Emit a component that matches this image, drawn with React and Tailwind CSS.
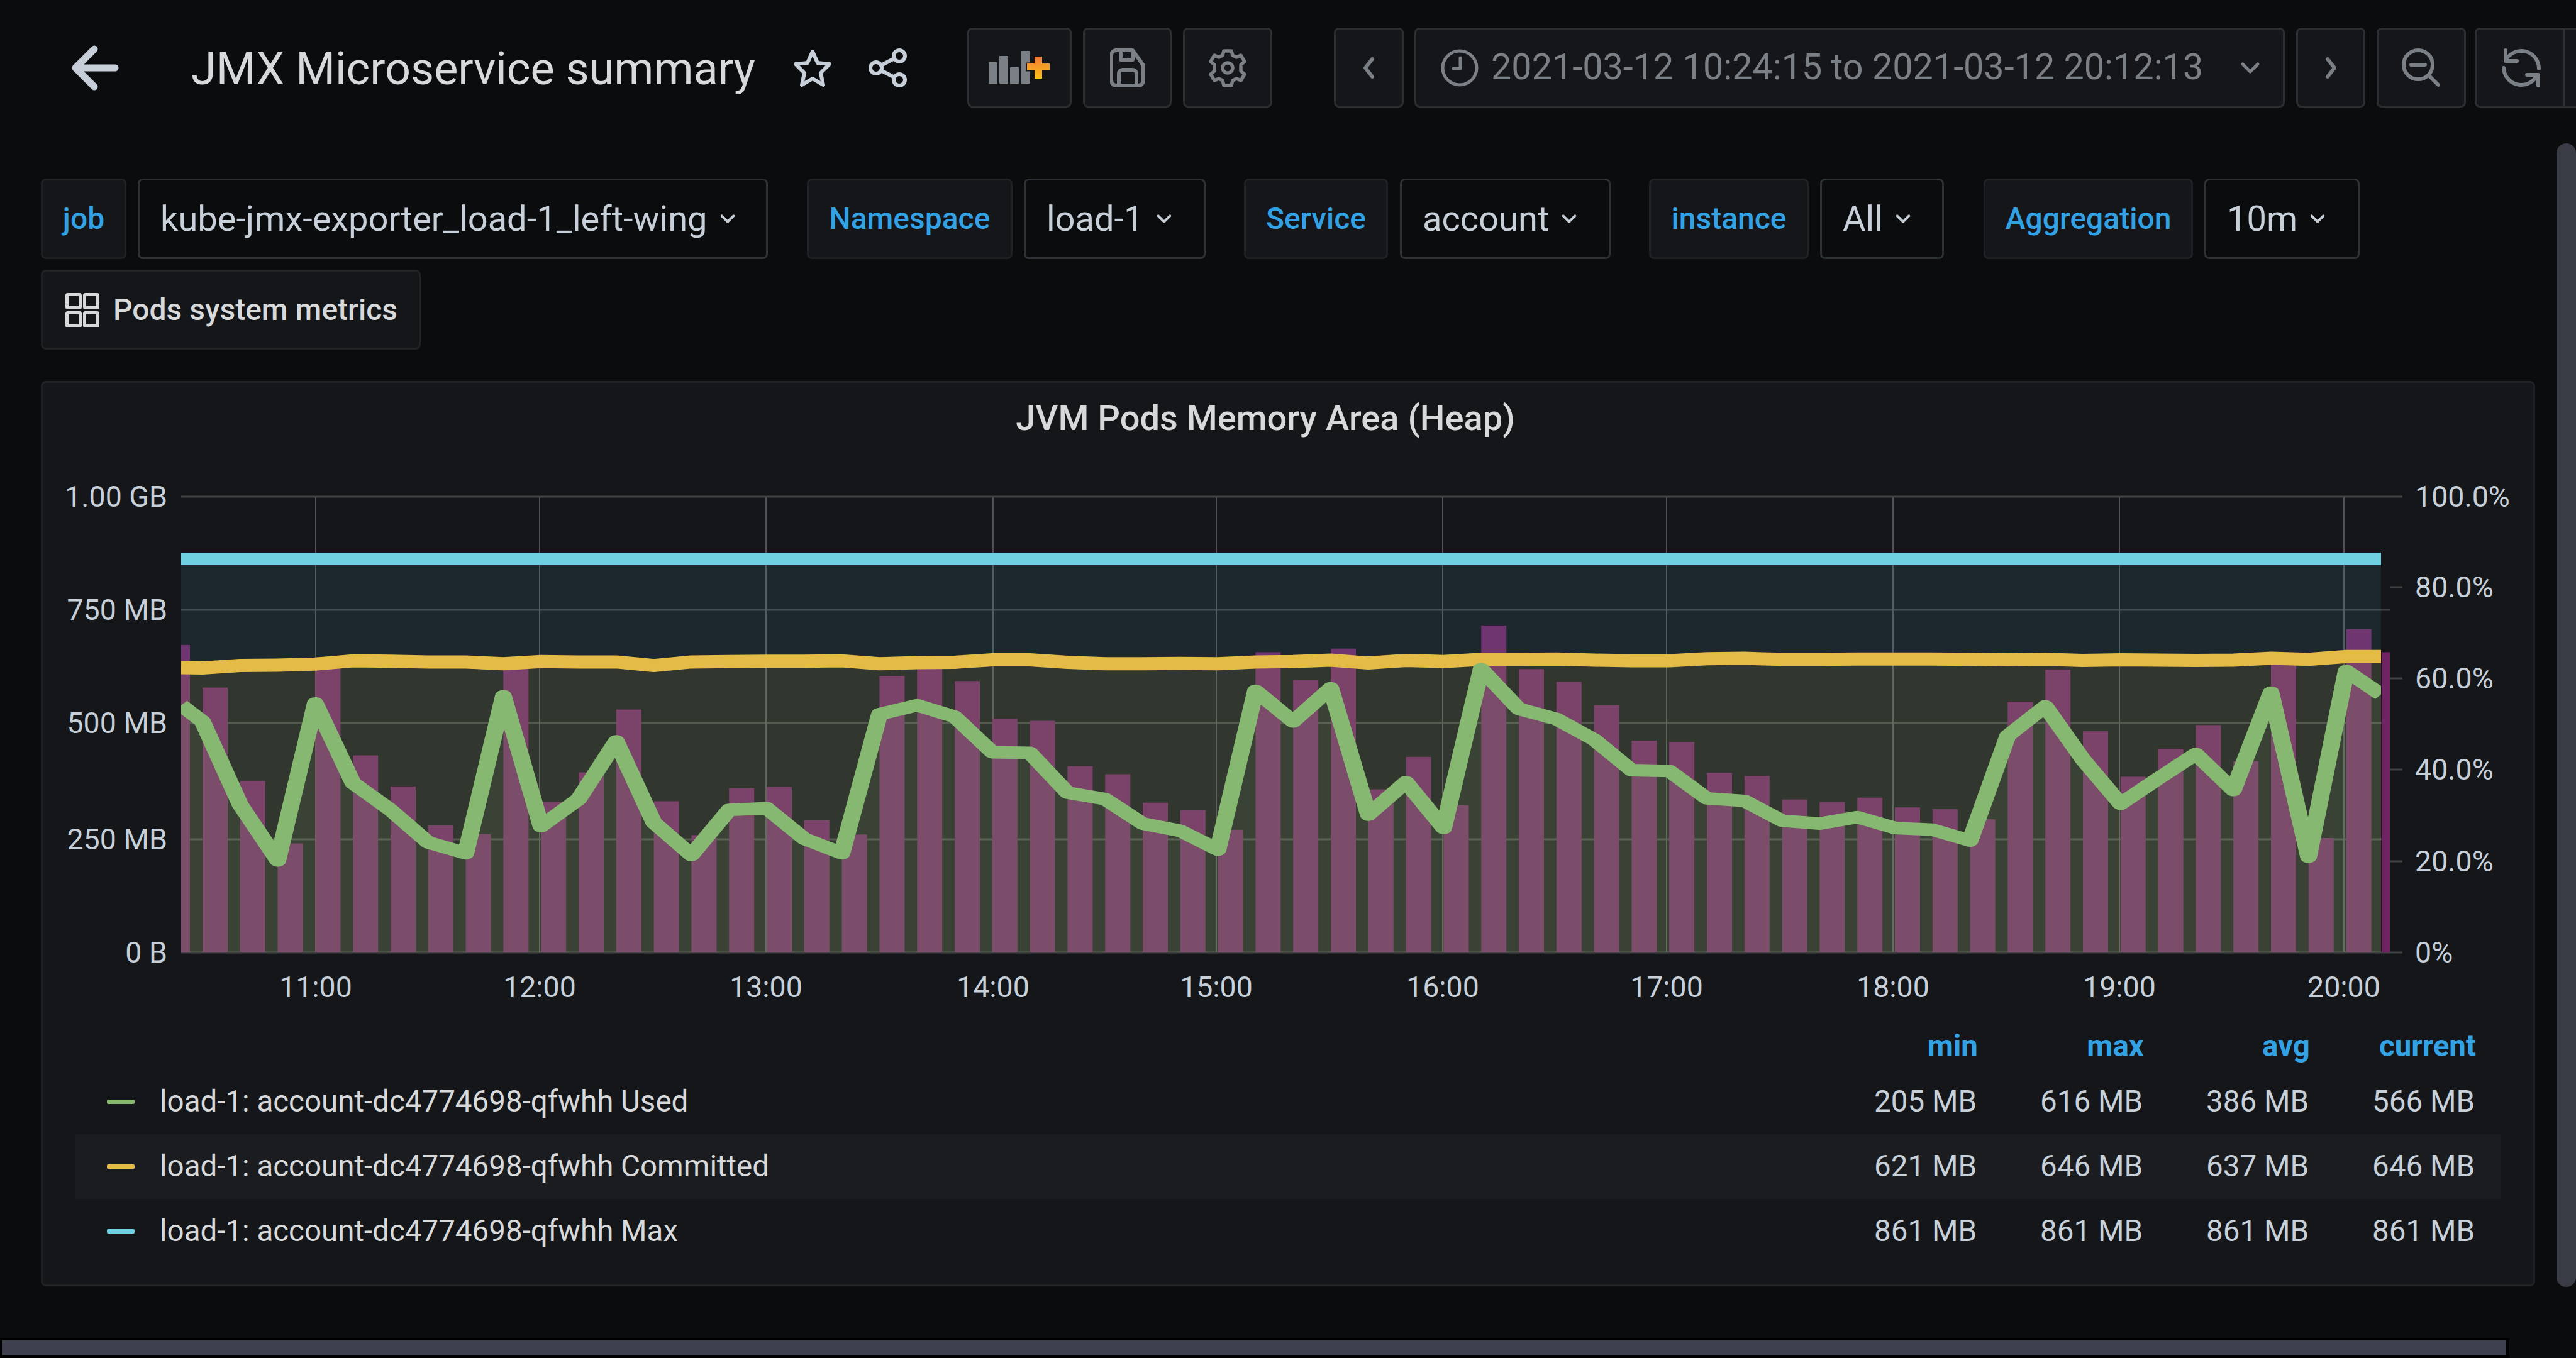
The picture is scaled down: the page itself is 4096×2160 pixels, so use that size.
import React from "react";

const BX = (i) => 322 + 59.8 * i;
const Y = (v) => 740 + v / 1.742;
const BASE = 1515;
const barTops = [498,616,875,1048,555,804,890,998,1022,550,933,851,677,931,1025,895,891,984,1023,584,555,598,703,708,834,856,935,955,1010,518,595,508,898,808,942,444,565,600,665,763,767,852,861,926,933,921,948,953,981,655,566,737,863,786,720,820,545,1033,454,518];
const green = [665,710,940,1095,660,880,955,1045,1075,640,1000,925,765,990,1080,955,950,1035,1075,690,665,697,795,797,907,925,993,1013,1065,625,710,618,968,878,1005,565,675,703,760,845,847,923,930,985,993,975,1005,1010,1040,750,668,815,938,868,800,900,630,1085,570,635];
const yellow = [561,562,555,554,551,542,543,545,545,550,544,545,545,555,545,544,543,543,542,550,547,546,539,539,546,550,550,549,550,545,544,540,548,541,544,538,538,537,540,542,542,536,535,538,538,537,537,537,538,539,538,541,539,540,541,540,535,538,530,530];
const PX = (idx) => (idx === 0 ? 288 : idx === 59 ? 3786 : BX(idx - 1));
const pts = (arr, sx = 1) => arr.map((v, i) => `${(PX(i) / sx).toFixed(1)},${Y(v).toFixed(1)}`).join(" ");
const area = (arr) => `288,${BASE} ${pts(arr)} 3786,${BASE}`;
const vLines = [502,858,1218,1579,1934,2294,2650,3010,3370,3727];
const hLines = [790,970,1150,1335,1515];
const xLabels = ["11:00","12:00","13:00","14:00","15:00","16:00","17:00","18:00","19:00","20:00"];
const rTicks = [[790,"100.0%"],[934,"80.0%"],[1079,"60.0%"],[1224,"40.0%"],[1370,"20.0%"],[1515,"0%"]];
const lLabels = [[790,"1.00 GB"],[970,"750 MB"],[1150,"500 MB"],[1335,"250 MB"],[1515,"0 B"]];
const BAR = "rgb(112,36,100)";
const STRETCH = 1.35;

function Chart() {
  return (
    <svg viewBox="68 740 3958 870" width="3958" height="870" className="block shrink-0" style={{ fontFamily: "Roboto, sans-serif" }}>
      <defs>
        <clipPath id="plot"><rect x="288" y="700" width="3498" height="815" /></clipPath>
      </defs>
      {hLines.map((y) => <rect key={y} x="288" y={y - 1.5} width="3512" height="3" fill="#404245" />)}
      {rTicks.map(([y]) => <rect key={y} x="3800" y={y - 1.5} width="20" height="3" fill="#404245" />)}
      {vLines.map((x) => <rect key={x} x={x - 1} y="790" width="2" height="725" fill="#4f5154" />)}
      <rect x="288" y={Y(498)} width="14" height={BASE - Y(498)} fill={BAR} />
      {barTops.slice(1, -1).map((t, i) => (
        <rect key={i} x={BX(i)} y={Y(t)} width="40" height={BASE - Y(t)} fill={BAR} />
      ))}
      <rect x="3787" y={Y(518)} width="13" height={BASE - Y(518)} fill={BAR} />
      <polygon points={`288,${BASE} 288,889 3786,889 3786,${BASE}`} fill="rgb(110,208,224)" fillOpacity="0.1" />
      <polygon points={area(yellow)} fill="rgb(234,184,57)" fillOpacity="0.1" />
      <polygon points={area(green)} fill="rgb(126,178,109)" fillOpacity="0.1" />
      <g clipPath="url(#plot)" fill="none">
        <rect x="288" y="879" width="3498" height="20" fill="#6ed0e0" />
        <polyline points={pts(yellow)} stroke="#e5bb47" strokeWidth="21" strokeLinejoin="round" />
        <g transform={`scale(${STRETCH} 1)`}>
          <polyline points={pts(green, STRETCH)} stroke="#86b872" strokeWidth="20" strokeLinejoin="round" />
        </g>
      </g>
      <g fill="#c7d0d9" fontSize="46.5">
        {lLabels.map(([y, t]) => <text key={t} x="266" y={y} textAnchor="end" dominantBaseline="central">{t}</text>)}
        {rTicks.map(([y, t]) => <text key={t} x="3840" y={y} dominantBaseline="central">{t}</text>)}
        {xLabels.map((t, i) => <text key={t} x={vLines[i]} y="1570" textAnchor="middle" dominantBaseline="central">{t}</text>)}
      </g>
    </svg>
  );
}

const Btn = ({ className = "", children }) => (
  <div className={`flex items-center justify-center h-[127px] bg-[#141619] border-[3px] border-[#2c2e31] rounded-lg shrink-0 ${className}`}>{children}</div>
);

const Gray = "#7b8087";

function AddPanelIcon() {
  return (
    <svg width="98" height="60" viewBox="1572 79 98 60">
      <defs>
        <linearGradient id="plus" x1="0" y1="0" x2="0" y2="1">
          <stop offset="0" stopColor="#f0793c" />
          <stop offset="1" stopColor="#fdc114" />
        </linearGradient>
      </defs>
      <g fill={Gray}>
        <rect x="1572" y="100" width="14" height="34" rx="1" />
        <rect x="1589" y="90" width="14" height="44" rx="1" />
        <rect x="1606" y="108" width="14" height="26" rx="1" />
        <rect x="1624" y="82" width="14" height="52" rx="1" />
      </g>
      <path d="M1645 91h12v11h12v11h-12v13h-12v-13h-12v-11h12z" fill="url(#plus)" stroke="#141619" strokeWidth="3" paintOrder="stroke" />
    </svg>
  );
}
function SaveIcon() {
  return (
    <svg width="56" height="62" viewBox="0 0 56 62" fill="none" stroke={Gray} strokeWidth="6" strokeLinejoin="round">
      <path d="M10 3h26l17 24v24a8 8 0 0 1-8 8H10a8 8 0 0 1-8-8V10a8 8 0 0 1 7-7z" />
      <path d="M17 3v15h19V3M14 59V40a6 6 0 0 1 6-6h16a6 6 0 0 1 6 6v19" />
    </svg>
  );
}
function CogIcon() {
  return (
    <svg width="60" height="62" viewBox="-30 -31 60 62" fill="none" stroke={Gray} strokeWidth="5.5" strokeLinejoin="round">
      <path d="M-6 -27 H6 L8 -20 L14 -17 L21 -20 L27 -10 L21 -5 V5 L27 10 L21 20 L14 17 L8 20 L6 28 H-6 L-8 20 L-14 17 L-21 20 L-27 10 L-21 5 V-5 L-27 -10 L-21 -20 L-14 -17 L-8 -20 Z" />
      <circle cx="0" cy="0" r="8" />
    </svg>
  );
}
function StarIcon() {
  return (
    <svg width="62" height="60" viewBox="0 0 62 60" fill="none" stroke="#c7d0d9" strokeWidth="6" strokeLinejoin="round">
      <path d="M31 4l8 18 19 2-14 14 4 19-17-10-17 10 4-19L4 24l19-2z" />
    </svg>
  );
}
function ShareIcon() {
  return (
    <svg width="62" height="62" viewBox="0 0 62 62" fill="none" stroke="#c7d0d9" strokeWidth="6">
      <circle cx="12" cy="31" r="9" /><circle cx="49" cy="12" r="9" /><circle cx="49" cy="50" r="9" />
      <path d="M20 27l21-11M20 35l21 11" />
    </svg>
  );
}
function ArrowBack() {
  return (
    <svg width="76" height="72" viewBox="0 0 76 72" fill="none" stroke="#c7d0d9" strokeWidth="11" strokeLinecap="round" strokeLinejoin="round">
      <path d="M37 6L7 36l30 30M8 36h62" />
    </svg>
  );
}
function Clock() {
  return (
    <svg width="60" height="60" viewBox="0 0 60 60" fill="none" stroke={Gray} strokeWidth="5" strokeLinecap="round" strokeLinejoin="round">
      <circle cx="30" cy="30" r="27" /><path d="M31 14v17H20" />
    </svg>
  );
}
function ZoomOutIcon() {
  return (
    <svg width="62" height="62" viewBox="0 0 62 62" fill="none" stroke={Gray} strokeWidth="6" strokeLinecap="round">
      <circle cx="26" cy="26" r="23" /><path d="M15 26h22M43 43l15 15" />
    </svg>
  );
}
function SyncIcon() {
  return (
    <svg width="62" height="62" viewBox="0 0 62 62" fill="none" stroke={Gray} strokeWidth="6" strokeLinecap="round" strokeLinejoin="round">
      <path d="M59 32A28 28 0 0 0 8 16" /><path d="M3 31a28 28 0 0 0 51 15" />
      <path d="M6 3v17h18" /><path d="M58 59V42H40" />
    </svg>
  );
}
const Chev = ({ d, w = 24, h = 38, color = Gray, sw = 6 }) => (
  <svg width={w} height={h} viewBox={`0 0 ${w} ${h}`} fill="none" stroke={color} strokeWidth={sw} strokeLinecap="round" strokeLinejoin="round"><path d={d} /></svg>
);
const DownChev = ({ size = 28, color = "#c7d0d9", sw = 3.5 }) => (
  <svg width={size} height={size} viewBox="0 0 24 24" fill="none" stroke={color} strokeWidth={sw} strokeLinecap="round" strokeLinejoin="round"><path d="M4 8l8 8 8-8" /></svg>
);
function GridIcon() {
  return (
    <svg width="54" height="54" viewBox="0 0 54 54" fill="none" stroke="#d8d9da" strokeWidth="5" strokeLinejoin="round">
      <rect x="2.5" y="2.5" width="21" height="21" rx="1" /><rect x="30.5" y="2.5" width="21" height="21" rx="1" />
      <rect x="2.5" y="31.5" width="21" height="21" rx="1" /><rect x="30.5" y="31.5" width="21" height="21" rx="1" />
    </svg>
  );
}

const Label = ({ w, children }) => (
  <div style={{ width: w }} className="h-[128px] flex items-center justify-center bg-[#141619] border-[3px] border-[#202226] rounded-lg text-[#33a2e5] text-[48px] font-medium shrink-0">{children}</div>
);
const Sel = ({ w, ml = "ml-[18px]", children }) => (
  <div style={{ width: w }} className={`h-[128px] flex items-center justify-start pl-[33px] gap-[18px] bg-[#0b0c0e] border-[3px] border-[#2c3235] rounded-lg text-[#c7d0d9] text-[56px] shrink-0 whitespace-nowrap ${ml}`}>
    <span>{children}</span><DownChev />
  </div>
);

const rows = [
  ["#86b872", "load-1: account-dc4774698-qfwhh Used", ["205 MB","616 MB","386 MB","566 MB"], false],
  ["#e5bb47", "load-1: account-dc4774698-qfwhh Committed", ["621 MB","646 MB","637 MB","646 MB"], true],
  ["#6ed0e0", "load-1: account-dc4774698-qfwhh Max", ["861 MB","861 MB","861 MB","861 MB"], false],
];

export default function App() {
  return (
    <div className="relative w-[4096px] h-[2160px] overflow-hidden bg-[#0b0c0e]" style={{ fontFamily: "Roboto, sans-serif" }}>
      {/* top bar */}
      <div className="flex items-center h-[127px] mt-[44px] absolute top-0 left-0 w-[4096px]">
        <div className="ml-[113px] shrink-0"><ArrowBack /></div>
        <div className="ml-[115px] w-[961px] shrink-0 pt-[4px] text-[72px] text-[#d8d9da] whitespace-nowrap">JMX Microservice summary</div>
        <div className="ml-[-4px] shrink-0"><StarIcon /></div>
        <div className="ml-[58px] shrink-0"><ShareIcon /></div>
        <Btn className="w-[166px] ml-[95px]"><AddPanelIcon /></Btn>
        <Btn className="w-[141px] ml-[18px]"><SaveIcon /></Btn>
        <Btn className="w-[142px] ml-[18px]"><CogIcon /></Btn>
        <Btn className="w-[111px] ml-[98px]"><Chev d="M17 5L6 19l11 14" /></Btn>
        <Btn className="w-[1384px] ml-[17px] justify-start pl-[39px] text-[#7b8087] text-[57.5px] gap-[20px]">
          <Clock />
          <span className="whitespace-nowrap w-[1169px]">2021-03-12 10:24:15 to 2021-03-12 20:12:13</span>
          <DownChev size={36} color={Gray} sw={3.4} />
        </Btn>
        <Btn className="w-[110px] ml-[18px]"><Chev d="M7 5l11 14L7 33" /></Btn>
        <Btn className="w-[142px] ml-[18px]"><ZoomOutIcon /></Btn>
        <Btn className="w-[200px] ml-[14px] justify-start pl-[40px] relative">
          <SyncIcon />
          <div className="absolute left-[138px] top-0 bottom-0 w-[3px] bg-[#2c2e31]" />
        </Btn>
      </div>

      <div className="absolute top-[284px] left-[65px] flex items-center">
        <Label w={136}>job</Label>
        <Sel w={1002}>kube-jmx-exporter_load-1_left-wing</Sel>
        <div className="ml-[62px]"><Label w={327}>Namespace</Label></div>
        <Sel w={289}>load-1</Sel>
        <div className="ml-[61px]"><Label w={229}>Service</Label></div>
        <Sel w={335} ml="ml-[19px]">account</Sel>
        <div className="ml-[61px]"><Label w={254}>instance</Label></div>
        <Sel w={197}>All</Sel>
        <div className="ml-[63px]"><Label w={333}>Aggregation</Label></div>
        <Sel w={247} ml="ml-[18px]">10m</Sel>
      </div>
      <div className="absolute top-[429px] left-[65px] w-[604px] h-[127px] flex items-center gap-[22px] pl-[36px] bg-[#141619] border-[3px] border-[#202226] rounded-lg text-[#d8d9da] text-[48px] font-medium">
        <GridIcon /><span className="whitespace-nowrap">Pods system metrics</span>
      </div>

      {/* panel */}
      <div className="absolute top-[606px] left-[65px] w-[3966px] h-[1440px] flex flex-col bg-[#141619] border-[3px] border-[#202226] rounded-lg">
        <div className="h-[131px] shrink-0 flex items-center justify-center pb-[20px] pr-[72px] text-[56px] font-medium text-[#d8d9da]">JVM Pods Memory Area (Heap)</div>
        <Chart />
        <div className="flex items-end h-[91px] pb-[1px] pr-[91px] justify-end text-[#33a2e5] text-[47.5px] font-bold shrink-0 ml-[52px]">
          {["min","max","avg","current"].map((h) => <div key={h} className="w-[264px] text-right">{h}</div>)}
        </div>
        {rows.map(([c, label, vals, hi]) => (
          <div key={label} className={`flex items-center h-[103px] ml-[52px] mr-[52px] pl-[50px] pr-[41px] shrink-0 text-[47.5px] ${hi ? "bg-[#1a1c20]" : ""}`}>
            <div className="w-[44px] h-[7px] rounded-[2px] mr-[40px] shrink-0" style={{ background: c }} />
            <div className="flex-1 text-[#d8d9da] whitespace-nowrap">{label}</div>
            {vals.map((v, i) => <div key={i} className="w-[264px] text-right text-[#c7d0d9]">{v}</div>)}
          </div>
        ))}
      </div>

      {/* scrollbars */}
      <div className="absolute left-[4065px] top-[228px] w-[31px] h-[1819px] rounded-t-full rounded-b-full bg-[#3a3c45]" />
      <div className="absolute left-0 top-[2128px] w-[3989px] h-[32px] bg-[#000000]" />
      <div className="absolute left-[3px] top-[2132px] w-[3982px] h-[24px] bg-[#3e404e]" />
    </div>
  );
}
